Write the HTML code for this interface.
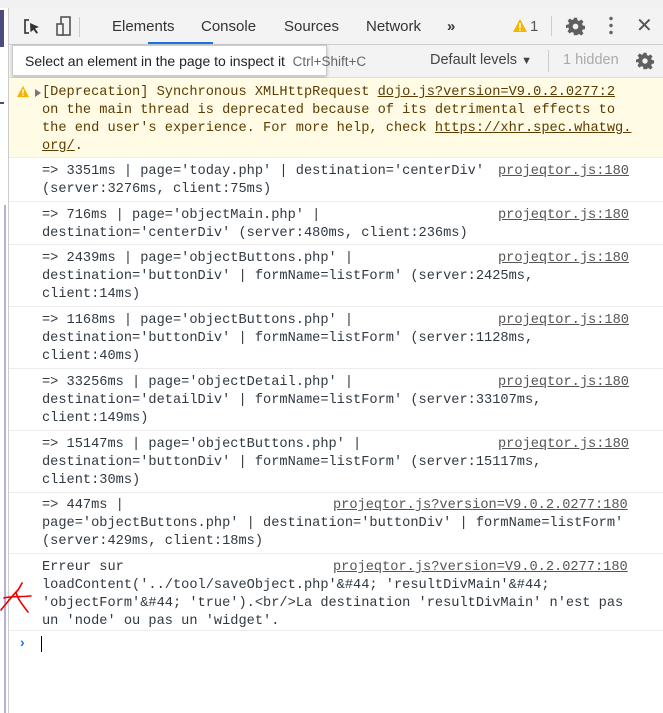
<!DOCTYPE html>
<html><head><meta charset="utf-8"><style>
*{margin:0;padding:0;box-sizing:border-box}
body{width:663px;height:713px;background:#fff;position:relative;overflow:hidden;font-family:"Liberation Sans",sans-serif}
.a{position:absolute}
.m{font-family:"Liberation Mono",monospace;font-size:13.65px;color:#303942;white-space:pre;line-height:18px}
.ln{color:#555;text-decoration:underline}
.row{position:absolute;left:9px;right:0;border-bottom:1px solid #ececec}
.tab{position:absolute;top:18px;font-size:15px;color:#333}
</style></head><body>
<div class="a" style="left:0;top:0;width:663px;height:8px;background:#f1f1f1"></div>
<div class="a" style="left:0;top:10px;width:4px;height:37px;background:#4b4b7e"></div>
<div class="a" style="left:0;top:102px;width:4px;height:2px;background:#4b4b7e"></div>
<div class="a" style="left:4px;top:205px;width:2px;height:508px;background:#b7b0d6"></div>
<div class="a" style="left:8px;top:8px;width:1px;height:705px;background:#ccc"></div>
<svg width="0" height="0" style="position:absolute"><defs><symbol id="g" viewBox="0 0 24 24"><path d="M10 1h4l.6 3.2 2 .9 2.7-1.9 2.8 2.8-1.9 2.7.9 2 3.2.6v4l-3.2.6-.9 2 1.9 2.7-2.8 2.8-2.7-1.9-2 .9L14 23h-4l-.6-3.2-2-.9-2.7 1.9-2.8-2.8 1.9-2.7-.9-2L-.1 14v-4l3.2-.6.9-2L2.1 4.7l2.8-2.8 2.7 1.9 2-.9z" fill="#5f5f5f"/><circle cx="12" cy="12" r="3.6" fill="#f3f3f3"/></symbol></defs></svg>
<!-- toolbar -->
<div class="a" style="left:9px;top:8px;width:654px;height:37px;background:#f3f3f3;border-bottom:1px solid #ccc"></div>
<svg class="a" style="left:22px;top:17px" width="20" height="20" viewBox="0 0 20 20"><path d="M7 3H3v13h4" fill="none" stroke="#444" stroke-width="1.8"/><path d="M8 6l9 4-4 1.5 3 4-1.5 1.2-3-4-3 2.5z" fill="#333"/></svg>
<svg class="a" style="left:55px;top:15px" width="20" height="24" viewBox="0 0 20 24"><rect x="6" y="2" width="9" height="18" fill="none" stroke="#555" stroke-width="1.6"/><rect x="2" y="9" width="6" height="11" fill="#f3f3f3" stroke="#555" stroke-width="1.6"/></svg>
<div class="a" style="left:79px;top:17px;width:1px;height:20px;background:#ccc"></div>
<div class="tab" style="left:112px">Elements</div>
<div class="tab" style="left:201px">Console</div>
<div class="a" style="left:148px;top:42px;width:65px;height:2px;background:#1a73e8"></div>
<div class="tab" style="left:284px">Sources</div>
<div class="tab" style="left:366px">Network</div>
<div class="tab" style="left:447px;font-weight:bold">»</div>
<svg class="a" style="left:512px;top:18px" width="16" height="15" viewBox="0 0 16 15"><path d="M8 1L15 14H1z" fill="#f4b400"/><rect x="7.2" y="5" width="1.6" height="5" fill="#fff"/><rect x="7.2" y="11" width="1.6" height="1.6" fill="#fff"/></svg>
<div class="tab" style="left:530px;color:#555">1</div>
<div class="a" style="left:551px;top:16px;width:1px;height:20px;background:#ccc"></div>
<svg class="a" style="left:566px;top:17px" width="19" height="19"><use href="#g"/></svg>
<div class="a" style="left:609px;top:15px;width:4px;height:20px;background:radial-gradient(circle,#666 1.6px,transparent 2px) 0 0/4px 7px"></div>
<div class="a" style="left:636px;top:13px;font-size:20px;color:#555">✕</div>
<!-- second toolbar -->
<div class="a" style="left:9px;top:45px;width:654px;height:33px;background:#f3f3f3;border-bottom:1px solid #ddd"></div>
<div class="a" style="left:12px;top:45px;width:315px;height:31px;background:#fff;border:1px solid #ccc;box-shadow:0 1px 3px rgba(0,0,0,.25)"></div>
<div class="a" style="left:25px;top:53px;font-size:14px;color:#222;white-space:nowrap">Select an element in the page to inspect it <span style="color:#666;font-size:13.5px">&nbsp;Ctrl+Shift+C</span></div>
<div class="a" style="left:430px;top:52px;font-size:14.5px;color:#444">Default levels <span style="font-size:11px">▼</span></div>
<div class="a" style="left:548px;top:50px;width:1px;height:22px;background:#ccc"></div>
<div class="a" style="left:563px;top:52px;font-size:14.5px;color:#aaa">1 hidden</div>
<svg class="a" style="left:636px;top:52px" width="18" height="18"><use href="#g"/></svg>
<!-- warning -->
<div class="a" style="left:9px;top:78px;width:654px;height:80px;background:#fffbe5;border-bottom:1px solid #fff0b3"></div>
<svg class="a" style="left:16px;top:85px" width="14" height="13" viewBox="0 0 16 15"><path d="M8 1L15 14H1z" fill="#f4b400"/><rect x="7.2" y="5" width="1.6" height="5" fill="#fff"/><rect x="7.2" y="11" width="1.6" height="1.6" fill="#fff"/></svg>
<div class="a" style="left:35px;top:89px;width:0;height:0;border-left:6px solid #777;border-top:4px solid transparent;border-bottom:4px solid transparent"></div>
<div class="a m" style="left:42px;top:84px;color:#5c3c00">[Deprecation] Synchronous XMLHttpRequest <span style="text-decoration:underline">dojo.js?version=V9.0.2.0277:2</span>
on the main thread is deprecated because of its detrimental effects to
the end user's experience. For more help, check <span style="text-decoration:underline">https://xhr.spec.whatwg.</span>
<span style="text-decoration:underline">org/</span>.</div>
<!-- rows -->
<div class="row" style="top:158px;height:44px"></div>
<div class="a m" style="left:42px;top:163px">=> 3351ms | page='today.php' | destination='centerDiv'
(server:3276ms, client:75ms)</div>
<div class="a m ln" style="left:498px;top:163px">projeqtor.js:180</div>
<div class="row" style="top:202px;height:43px"></div>
<div class="a m" style="left:42px;top:207px">=> 716ms | page='objectMain.php' |
destination='centerDiv' (server:480ms, client:236ms)</div>
<div class="a m ln" style="left:498px;top:207px">projeqtor.js:180</div>
<div class="row" style="top:245px;height:62px"></div>
<div class="a m" style="left:42px;top:250px">=> 2439ms | page='objectButtons.php' |
destination='buttonDiv' | formName=listForm' (server:2425ms,
client:14ms)</div>
<div class="a m ln" style="left:498px;top:250px">projeqtor.js:180</div>
<div class="row" style="top:307px;height:62px"></div>
<div class="a m" style="left:42px;top:312px">=> 1168ms | page='objectButtons.php' |
destination='buttonDiv' | formName=listForm' (server:1128ms,
client:40ms)</div>
<div class="a m ln" style="left:498px;top:312px">projeqtor.js:180</div>
<div class="row" style="top:369px;height:62px"></div>
<div class="a m" style="left:42px;top:374px">=> 33256ms | page='objectDetail.php' |
destination='detailDiv' | formName=listForm' (server:33107ms,
client:149ms)</div>
<div class="a m ln" style="left:498px;top:374px">projeqtor.js:180</div>
<div class="row" style="top:431px;height:62px"></div>
<div class="a m" style="left:42px;top:436px">=> 15147ms | page='objectButtons.php' |
destination='buttonDiv' | formName=listForm' (server:15117ms,
client:30ms)</div>
<div class="a m ln" style="left:498px;top:436px">projeqtor.js:180</div>
<div class="row" style="top:493px;height:61px"></div>
<div class="a m" style="left:42px;top:497px">=> 447ms |
page='objectButtons.php' | destination='buttonDiv' | formName=listForm'
(server:429ms, client:18ms)</div>
<div class="a m ln" style="left:333px;top:497px">projeqtor.js?version=V9.0.2.0277:180</div>
<div class="row" style="top:554px;height:77px"></div>
<div class="a m" style="left:42px;top:559px">Erreur sur
loadContent('../tool/saveObject.php'&amp;#44; 'resultDivMain'&amp;#44;
'objectForm'&amp;#44; 'true').&lt;br/&gt;La destination 'resultDivMain' n'est pas
un 'node' ou pas un 'widget'.</div>
<div class="a m ln" style="left:333px;top:559px">projeqtor.js?version=V9.0.2.0277:180</div>
<div class="a" style="left:20px;top:634px;color:#1a73e8;font-size:14px;font-weight:bold">›</div>
<div class="a" style="left:41px;top:636px;width:1px;height:16px;background:#000"></div>
<svg class="a" style="left:0;top:578px" width="34" height="40" viewBox="0 0 34 40"><path d="M1 32C6 26 12 18 18 12C20 9 21 7 22 5M16 14C17 20 22 26 28 34M4 20C10 18 20 19 31 18" fill="none" stroke="#e00" stroke-width="1.6" stroke-linecap="round"/></svg>
</body></html>
